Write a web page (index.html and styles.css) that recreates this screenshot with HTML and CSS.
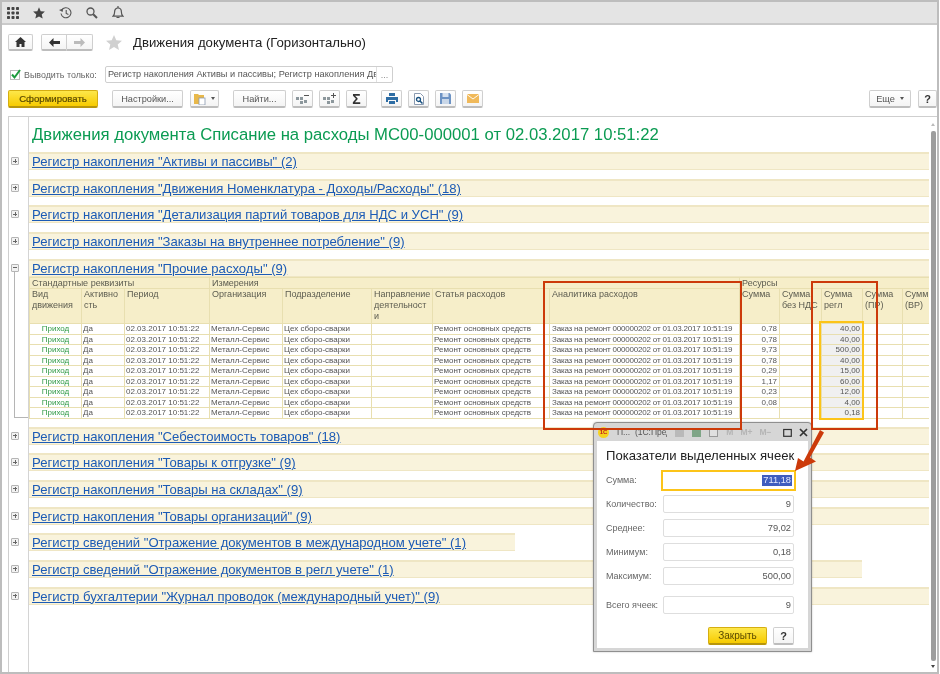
FILE: index.html
```html
<!DOCTYPE html>
<html lang="ru">
<head>
<meta charset="utf-8">
<title>Движения документа</title>
<link rel="stylesheet" href="styles.css">
</head>
<body>
<div class="window">
  <div class="topbar">
    <svg class="ti" width="12" height="12" viewBox="0 0 12 12"><g fill="#444"><rect x="0" y="0" width="3" height="3" rx=".7"/><rect x="4.5" y="0" width="3" height="3" rx=".7"/><rect x="9" y="0" width="3" height="3" rx=".7"/><rect x="0" y="4.5" width="3" height="3" rx=".7"/><rect x="4.5" y="4.5" width="3" height="3" rx=".7"/><rect x="9" y="4.5" width="3" height="3" rx=".7"/><rect x="0" y="9" width="3" height="3" rx=".7"/><rect x="4.5" y="9" width="3" height="3" rx=".7"/><rect x="9" y="9" width="3" height="3" rx=".7"/></g></svg>
    <svg class="ti" width="12" height="12" viewBox="0 0 12 12"><polygon fill="#444" points="6,0.3 7.7,4.2 11.9,4.6 8.7,7.4 9.7,11.6 6,9.4 2.3,11.6 3.3,7.4 0.1,4.6 4.3,4.2"/></svg>
    <svg class="ti" width="13" height="12" viewBox="0 0 13 12"><path fill="none" stroke="#555" stroke-width="1.1" d="M2.6 3.2A5 5 0 1 1 2 6.5M7.2 3v3.4l2.2 1.2"/><polygon fill="#555" points="0,3 4.2,1.5 3.6,5"/></svg>
    <svg class="ti" width="12" height="12" viewBox="0 0 12 12"><circle cx="4.5" cy="4.5" r="3.5" fill="none" stroke="#555" stroke-width="1.3"/><path d="M7.2 7.2L11 11" stroke="#555" stroke-width="2"/></svg>
    <svg class="ti" width="12" height="13" viewBox="0 0 12 13"><path fill="none" stroke="#555" stroke-width="1.2" d="M1 10.2c1.3-1 1.6-2 1.6-4.2S4 2 6 2s3.4 1.8 3.4 4 .3 3.2 1.6 4.2z"/><path d="M6 0v2M4.5 11.5h3" stroke="#555" stroke-width="1.2"/></svg>
  </div>

  <div class="navrow">
    <button class="btn home" type="button" aria-label="Начало"><svg width="11" height="10" viewBox="0 0 11 10"><path fill="#333" d="M5.5 0L11 5H9.500v5H6.500V7h-2v3h-3V5H0z"/></svg></button>
    <div class="navpair">
      <button class="btn" type="button" aria-label="Назад"><svg width="11" height="9" viewBox="0 0 11 9"><path fill="#333" d="M4.500 0v3H11v3H4.500v3L0 4.500z"/></svg></button>
      <button class="btn" type="button" aria-label="Вперёд"><svg width="11" height="9" viewBox="0 0 11 9"><path fill="#bbb" d="M6.500 0v3H0v3h6.500v3L11 4.500z"/></svg></button>
    </div>
    <svg class="bigstar" width="16" height="15" viewBox="0 0 16 15"><polygon fill="#d0d0d0" points="8,0 10.3,5.3 16,5.8 11.7,9.5 13,15 8,12.1 3,15 4.3,9.500 0,5.8 5.7,5.3"/></svg>
    <h1 class="doctitle">Движения документа (Горизонтально)</h1>
  </div>

  <div class="filterrow">
    <span class="check"><svg width="11" height="11" viewBox="0 0 11 11"><path d="M2 5.500l2.500 3L10 1" fill="none" stroke="#1a9a3c" stroke-width="2"/></svg></span>
    <label class="filterlabel">Выводить только:</label>
    <div class="filterinput"><span class="filtertext">Регистр накопления Активы и пассивы; Регистр накопления Дви</span><span class="dots">...</span></div>
  </div>

  <div class="toolbar">
    <button class="btn primary w-form" type="button">Сформировать</button>
    <button class="btn w-set sep" type="button">Настройки...</button>
    <button class="btn w-var" type="button"><svg width="12" height="12" viewBox="0 0 12 12"><path fill="#e8b84a" d="M0 1h4l1 1h5v3H5v6H0z"/><rect x="5" y="5" width="6" height="7" fill="#fff" stroke="#8a9ab0" stroke-width=".8"/></svg><i class="caret"></i></button>
    <button class="btn w-find sep" type="button">Найти...</button>
    <button class="btn w-icon" type="button" aria-label="Свернуть"><svg width="13" height="12" viewBox="0 0 13 12"><g fill="#8c979c"><rect x="0" y="4" width="3" height="3"/><rect x="4" y="4" width="3" height="3"/><rect x="4" y="8" width="3" height="3"/><rect x="8" y="7" width="3" height="3"/></g><path d="M8 2.500h5" stroke="#555"/></svg></button>
    <button class="btn w-icon" type="button" aria-label="Развернуть"><svg width="13" height="12" viewBox="0 0 13 12"><g fill="#8c979c"><rect x="0" y="4" width="3" height="3"/><rect x="4" y="4" width="3" height="3"/><rect x="4" y="8" width="3" height="3"/><rect x="8" y="7" width="3" height="3"/></g><path d="M8 2.500h5M10.500 0v5" stroke="#555"/></svg></button>
    <button class="btn w-icon sigma" type="button">Σ</button>
    <button class="btn w-icon sep" type="button" aria-label="Печать"><svg width="12" height="11" viewBox="0 0 12 11"><path fill="#2e6da4" d="M3 0h6v3H3zM0 4h12v5h-2V7H2v2H0z"/><rect x="3" y="8" width="6" height="3" fill="#2e6da4"/></svg></button>
    <button class="btn w-icon" type="button" aria-label="Просмотр"><svg width="10" height="12" viewBox="0 0 10 12"><path fill="#fff" stroke="#8a9ab0" d="M.5.500h6l3 3v8h-9z"/><circle cx="4.500" cy="6.500" r="2" fill="none" stroke="#17507f" stroke-width="1.300"/><path d="M6 8l2.500 2.500" stroke="#17507f" stroke-width="1.500"/></svg></button>
    <button class="btn w-icon" type="button" aria-label="Сохранить"><svg width="11" height="11" viewBox="0 0 11 11"><path fill="#6d93c4" d="M0 0h9.500L11 1.500V11H0z"/><rect x="2.500" y="0" width="6" height="4" fill="#d7e2f0"/><rect x="2" y="6" width="7" height="5" fill="#c9d7e8"/></svg></button>
    <button class="btn w-icon" type="button" aria-label="Почта"><svg width="12" height="9" viewBox="0 0 12 9"><rect width="12" height="9" fill="#f0b95a"/><path d="M0 .5l6 4.500 6-4.500" fill="none" stroke="#fff" stroke-width=".9"/></svg></button>
    <button class="btn w-more push" type="button">Еще<i class="caret"></i></button>
    <button class="btn w-help" type="button">?</button>
  </div>

  <div class="report">
    <div class="main">
      <div class="group titlegroup"><div class="gutter"></div><div class="cellbody"><div class="reporttitle">Движения документа Списание на расходы МС00-000001 от 02.03.2017 10:51:22</div></div></div>

      <div class="group"><div class="gutter"><span class="tog plus"></span></div><div class="cellbody"><div class="band"><a href="#">Регистр накопления "Активы и пассивы" (2)</a></div></div></div>
      <div class="group"><div class="gutter"><span class="tog plus"></span></div><div class="cellbody"><div class="band"><a href="#">Регистр накопления "Движения Номенклатура - Доходы/Расходы" (18)</a></div></div></div>
      <div class="group"><div class="gutter"><span class="tog plus"></span></div><div class="cellbody"><div class="band"><a href="#">Регистр накопления "Детализация партий товаров для НДС и УСН" (9)</a></div></div></div>
      <div class="group"><div class="gutter"><span class="tog plus"></span></div><div class="cellbody"><div class="band"><a href="#">Регистр накопления "Заказы на внутреннее потребление" (9)</a></div></div></div>

      <div class="group open">
        <div class="gutter"><span class="tog"></span><span class="bracket"></span></div>
        <div class="cellbody">
          <div class="band"><a href="#">Регистр накопления "Прочие расходы" (9)</a></div>
          <table class="grid">
            <colgroup><col class="c1"><col class="c2"><col class="c3"><col class="c4"><col class="c5"><col class="c6"><col class="c7"><col class="c8"><col class="c9"><col class="c10"><col class="c11"><col class="c12"><col class="c13"></colgroup>
            <thead>
              <tr class="h1"><th colspan="3">Стандартные реквизиты</th><th colspan="5">Измерения</th><th colspan="5">Ресурсы</th></tr>
              <tr class="h2"><th>Вид<br>движения</th><th>Активно<br>сть</th><th>Период</th><th>Организация</th><th>Подразделение</th><th>Направление<br>деятельност<br>и</th><th>Статья расходов</th><th class="anal">Аналитика расходов</th><th>Сумма</th><th>Сумма<br>без НДС</th><th>Сумма<br>регл</th><th>Сумма<br>(ПР)</th><th>Сумм<br>(ВР)</th></tr>
            </thead>
            <tbody>
              <tr><td class="kind">Приход</td><td>Да</td><td>02.03.2017 10:51:22</td><td>Металл-Сервис</td><td>Цех сборо-сварки</td><td></td><td>Ремонт основных средств</td><td class="anal">Заказ на ремонт 000000202 от 01.03.2017 10:51:19</td><td class="num">0,78</td><td></td><td class="num sel">40,00</td><td></td><td></td></tr>
              <tr><td class="kind">Приход</td><td>Да</td><td>02.03.2017 10:51:22</td><td>Металл-Сервис</td><td>Цех сборо-сварки</td><td></td><td>Ремонт основных средств</td><td class="anal">Заказ на ремонт 000000202 от 01.03.2017 10:51:19</td><td class="num">0,78</td><td></td><td class="num sel">40,00</td><td></td><td></td></tr>
              <tr><td class="kind">Приход</td><td>Да</td><td>02.03.2017 10:51:22</td><td>Металл-Сервис</td><td>Цех сборо-сварки</td><td></td><td>Ремонт основных средств</td><td class="anal">Заказ на ремонт 000000202 от 01.03.2017 10:51:19</td><td class="num">9,73</td><td></td><td class="num sel">500,00</td><td></td><td></td></tr>
              <tr><td class="kind">Приход</td><td>Да</td><td>02.03.2017 10:51:22</td><td>Металл-Сервис</td><td>Цех сборо-сварки</td><td></td><td>Ремонт основных средств</td><td class="anal">Заказ на ремонт 000000202 от 01.03.2017 10:51:19</td><td class="num">0,78</td><td></td><td class="num sel">40,00</td><td></td><td></td></tr>
              <tr><td class="kind">Приход</td><td>Да</td><td>02.03.2017 10:51:22</td><td>Металл-Сервис</td><td>Цех сборо-сварки</td><td></td><td>Ремонт основных средств</td><td class="anal">Заказ на ремонт 000000202 от 01.03.2017 10:51:19</td><td class="num">0,29</td><td></td><td class="num sel">15,00</td><td></td><td></td></tr>
              <tr><td class="kind">Приход</td><td>Да</td><td>02.03.2017 10:51:22</td><td>Металл-Сервис</td><td>Цех сборо-сварки</td><td></td><td>Ремонт основных средств</td><td class="anal">Заказ на ремонт 000000202 от 01.03.2017 10:51:19</td><td class="num">1,17</td><td></td><td class="num sel">60,00</td><td></td><td></td></tr>
              <tr><td class="kind">Приход</td><td>Да</td><td>02.03.2017 10:51:22</td><td>Металл-Сервис</td><td>Цех сборо-сварки</td><td></td><td>Ремонт основных средств</td><td class="anal">Заказ на ремонт 000000202 от 01.03.2017 10:51:19</td><td class="num">0,23</td><td></td><td class="num sel">12,00</td><td></td><td></td></tr>
              <tr><td class="kind">Приход</td><td>Да</td><td>02.03.2017 10:51:22</td><td>Металл-Сервис</td><td>Цех сборо-сварки</td><td></td><td>Ремонт основных средств</td><td class="anal">Заказ на ремонт 000000202 от 01.03.2017 10:51:19</td><td class="num">0,08</td><td></td><td class="num sel">4,00</td><td></td><td></td></tr>
              <tr><td class="kind">Приход</td><td>Да</td><td>02.03.2017 10:51:22</td><td>Металл-Сервис</td><td>Цех сборо-сварки</td><td></td><td>Ремонт основных средств</td><td class="anal">Заказ на ремонт 000000202 от 01.03.2017 10:51:19</td><td class="num"></td><td></td><td class="num sel">0,18</td><td></td><td></td></tr>
            </tbody>
          </table>
        </div>
      </div>

      <div class="group"><div class="gutter"><span class="tog plus"></span></div><div class="cellbody"><div class="band"><a href="#">Регистр накопления "Себестоимость товаров" (18)</a></div></div></div>
      <div class="group"><div class="gutter"><span class="tog plus"></span></div><div class="cellbody"><div class="band"><a href="#">Регистр накопления "Товары к отгрузке" (9)</a></div></div></div>
      <div class="group"><div class="gutter"><span class="tog plus"></span></div><div class="cellbody"><div class="band"><a href="#">Регистр накопления "Товары на складах" (9)</a></div></div></div>
      <div class="group"><div class="gutter"><span class="tog plus"></span></div><div class="cellbody"><div class="band"><a href="#">Регистр накопления "Товары организаций" (9)</a></div></div></div>
      <div class="group"><div class="gutter"><span class="tog plus"></span></div><div class="cellbody"><div class="band short"><a href="#">Регистр сведений "Отражение документов в международном учете" (1)</a></div></div></div>
      <div class="group"><div class="gutter"><span class="tog plus"></span></div><div class="cellbody"><div class="band mid"><a href="#">Регистр сведений "Отражение документов в регл учете" (1)</a></div></div></div>
      <div class="group"><div class="gutter"><span class="tog plus"></span></div><div class="cellbody"><div class="band"><a href="#">Регистр бухгалтерии "Журнал проводок (международный учет)" (9)</a></div></div></div>
      <div class="group filler"><div class="gutter"></div><div class="cellbody"></div></div>
    </div>
    <div class="scroll"><i class="arr up"></i><span class="thumb"></span><i class="arr down"></i></div>
  </div>

  <div class="modal">
    <div class="mtitle">
      <span class="logo">1С</span>
      <span class="mname">П...&nbsp; (1С:Предп...</span>
      <span class="mtools">
        <i class="mbk"></i><i class="mbk green"></i><i class="mbk cal"></i>
        <b>M</b><b>M+</b><b>M−</b>
      </span>
      <svg class="mwin" width="9" height="9" viewBox="0 0 9 9"><rect x=".7" y="1.500" width="7.600" height="6.800" fill="none" stroke="#333" stroke-width="1.200"/></svg>
      <svg class="mwin" width="9" height="9" viewBox="0 0 9 9"><path d="M1 1l7 7M8 1L1 8" stroke="#333" stroke-width="1.700"/></svg>
    </div>
    <div class="mbody">
      <h2 class="mhead">Показатели выделенных ячеек</h2>
      <div class="mform">
        <span class="mlabel">Сумма:</span><div class="field focus"><span class="selected">711,18</span></div>
        <span class="mlabel">Количество:</span><div class="field">9</div>
        <span class="mlabel">Среднее:</span><div class="field">79,02</div>
        <span class="mlabel">Минимум:</span><div class="field">0,18</div>
        <span class="mlabel">Максимум:</span><div class="field">500,00</div>
        <span class="mlabel gapped">Всего ячеек:</span><div class="field gapped">9</div>
      </div>
      <div class="mbuttons">
        <button class="btn primary w-close" type="button">Закрыть</button>
        <button class="btn w-mhelp" type="button">?</button>
      </div>
    </div>
  </div>

  <div class="mark m1"></div>
  <div class="mark m2"></div>
  <div class="mark-y"></div>
  <svg class="arrow" width="30" height="42" viewBox="0 0 30 42"><path fill="#cc3a0a" d="M25 0l4 2.500-14 25 6 4L0 41l3-13 5.500 3.500z"/></svg>
</div>
</body>
</html>
```
FILE: styles.css
```css
* { box-sizing: border-box; }
html, body { margin: 0; padding: 0; background: #fff; }
body { font-family: "Liberation Sans", Arial, sans-serif; color: #444; }

.window {
  position: relative;
  width: 939px;
  height: 674px;
  border: 2px solid #bdbdbd;
  display: flex;
  flex-direction: column;
  overflow: hidden;
  background: #fff;
  filter: blur(0.45px);
}

/* top system bar */
.topbar {
  height: 23px;
  flex: none;
  background: #e4e4e4;
  border-bottom: 2px solid #cacaca;
  display: flex;
  align-items: center;
  padding: 0 0 0 5px;
  gap: 14px;
}

/* buttons */
.btn {
  display: inline-flex;
  align-items: center;
  justify-content: center;
  height: 18px;
  padding: 0;
  border: 1px solid #cfcfcf;
  border-bottom: 2px solid #bdbdbd;
  border-radius: 2px;
  background: linear-gradient(#fff, #f4f4f4);
  font: 9.2px "Liberation Sans", Arial, sans-serif;
  color: #555;
  flex: none;
}
.primary {
  background: linear-gradient(#fde74a, #f7cb00);
  border-color: #d5ae10;
  border-bottom-color: #b8960c;
  color: #5a4a00;
}
.caret {
  display: inline-block;
  width: 0;
  height: 0;
  margin-left: 5px;
  border: 2px solid transparent;
  border-top: 3px solid #555;
  border-bottom: 0;
}

/* nav row */
.navrow {
  height: 17px;
  margin: 9px 0 0 6px;
  display: flex;
  align-items: center;
  flex: none;
}
.home { width: 25px; height: 17px; }
.navpair { display: flex; margin-left: 8px; }
.navpair .btn { width: 26px; height: 17px; }
.navpair .btn:first-child { border-radius: 2px 0 0 2px; }
.navpair .btn:last-child { border-left: 0; border-radius: 0 2px 2px 0; }
.bigstar { margin-left: 13px; flex: none; }
.doctitle {
  margin: 0 0 0 11px;
  font-size: 13.2px;
  font-weight: 400;
  color: #222;
  white-space: nowrap;
}

/* filter row */
.filterrow {
  height: 17px;
  margin: 15px 0 0 8px;
  display: flex;
  align-items: center;
  flex: none;
}
.check {
  width: 10px;
  height: 10px;
  border: 1px solid #bbb;
  display: flex;
  background: #fff;
}
.check svg { flex: none; margin: -2px 0 0 -1px; }
.filterlabel { margin-left: 4px; width: 81px; font-size: 8.9px; color: #666; white-space: nowrap; }
.filterinput {
  display: flex;
  width: 288px;
  height: 17px;
  border: 1px solid #cfcfcf;
  border-radius: 2px;
  background: #fff;
}
.filtertext {
  width: 271px;
  padding: 0 0 0 2px;
  font-size: 9.2px;
  line-height: 15px;
  color: #555;
  white-space: nowrap;
  overflow: hidden;
  border-right: 1px solid #e0e0e0;
}
.dots { flex: 1; text-align: center; font-size: 9px; line-height: 16px; color: #888; }

/* toolbar */
.toolbar {
  height: 18px;
  margin: 7px 0 0 6px;
  display: flex;
  gap: 7px;
  flex: none;
}
.sep { margin-left: 7px; }
.push { margin-left: auto; }
.w-form { width: 90px; font-size: 9.6px; -webkit-text-stroke: .2px #5a4a00; }
.w-set { width: 71px; }
.w-var { width: 29px; }
.w-find { width: 53px; }
.w-icon { width: 21px; }
.w-more { width: 42px; }
.w-help { width: 19px; font-weight: 700; font-size: 11px; color: #333; }
.sigma { font-size: 14px; font-weight: 700; color: #333; }
.toolbar .btn + .w-icon { margin-left: -1px; }
.toolbar .sep.w-icon { margin-left: 7px; }

/* report */
.report {
  flex: 1;
  min-height: 0;
  margin: 8px 0 0 6px;
  border-top: 1px solid #cfcfcf;
  border-left: 1px solid #cfcfcf;
  display: flex;
}
.main { width: 920px; display: flex; flex-direction: column; overflow: hidden; }
.group { display: flex; flex: none; }
.gutter {
  width: 20px;
  flex: none;
  border-right: 1px solid #d4d4d4;
  display: flex;
  flex-direction: column;
  padding-top: 5px;
}
.cellbody { width: 900px; padding-bottom: 8.7px; }
.titlegroup .cellbody { height: 35px; padding: 0; }
.filler { flex: 1; }
.filler .cellbody { padding: 0; }
.reporttitle {
  padding: 8px 0 0 3px;
  font-size: 16.7px;
  line-height: 19px;
  color: #0b9b52;
  white-space: nowrap;
}

.tog {
  position: relative;
  display: block;
  flex: none;
  width: 8px;
  height: 8px;
  margin-left: 2px;
  border: 1px solid #b5b5b5;
  border-radius: 1px;
  background: linear-gradient(90deg, transparent 1px, #666 1px, #666 5px, transparent 5px) center / 100% 1px no-repeat, #f2f2f2;
}
.plus::after {
  content: "";
  position: absolute;
  left: 2.5px;
  top: 1px;
  width: 1px;
  height: 4px;
  background: #666;
}
.bracket {
  flex: 1;
  margin: 0 0 9px 5px;
  border-left: 1px solid #b5b5b5;
  border-bottom: 1px solid #b5b5b5;
}

.band {
  height: 18px;
  padding-left: 3px;
  background: #f9f3dc;
  border-top: 2px solid #efe6c4;
  border-bottom: 1px solid #efe6c4;
  white-space: nowrap;
  overflow: hidden;
}
.band a { font-size: 13.1px; line-height: 15px; color: #1c5bb5; display: block; }
.short { width: 486px; }
.mid { width: 833px; }

/* table */
.open .cellbody { padding-bottom: 7.8px; }
.grid {
  table-layout: fixed;
  width: 900px;
  border-collapse: collapse;
  font-size: 8px;
  line-height: 9px;
  color: #555;
}
.c1 { width: 52px; } .c2 { width: 43px; } .c3 { width: 85px; } .c4 { width: 73px; }
.c5 { width: 89px; } .c6 { width: 61px; } .c7 { width: 117px; } .c8 { width: 190px; }
.c9 { width: 40px; } .c10 { width: 42px; } .c11 { width: 41px; } .c12 { width: 40px; } .c13 { width: 27px; }
.grid th {
  background: #f6eec9;
  border: 1px solid #e8dfb0;
  padding: 0 2px;
  text-align: left;
  vertical-align: top;
  font-weight: 400;
  font-size: 9px;
  line-height: 11.3px;
  color: #5c5c50;
  white-space: nowrap;
  overflow: hidden;
}
.h1 { height: 11px; }
.h1 th { line-height: 10px; }
.h2 { height: 35px; }
.grid td {
  border: 1px solid #e8dfb0;
  padding: 0 1px;
  height: 10px;
  white-space: nowrap;
  overflow: hidden;
  background: #fff;
}
.grid tbody tr:nth-child(odd) td { height: 11px; }
.grid .kind { color: #2f9a46; text-align: center; }
.grid .num { text-align: right; padding-right: 2px; }
.grid .sel { background: #f0f0f0; }
.grid .anal { padding-left: 2px; }
.grid td.anal { letter-spacing: -0.19px; }

/* scrollbar */
.scroll {
  width: 8px;
  flex: none;
  display: flex;
  flex-direction: column;
  align-items: center;
  padding: 6px 0 4px;
}
.thumb { flex: 1; width: 5px; margin: 5px 0 4px; border-radius: 2px; background: #9d9d9d; }
.arr { width: 0; height: 0; border: 2px solid transparent; }
.arr.up { border-bottom: 3px solid #bbb; border-top: 0; }
.arr.down { border-top: 3px solid #444; border-bottom: 0; }

/* modal */
.modal {
  position: absolute;
  left: 591px;
  top: 420px;
  width: 219px;
  height: 230px;
  border: 1px solid #8f8f8f;
  border-radius: 4px 4px 0 0;
  background: #d6d6d6;
  padding: 0 3px 3px;
  display: flex;
  flex-direction: column;
  box-shadow: 0 0 2px rgba(0,0,0,.25);
}
.mtitle { height: 18px; display: flex; align-items: center; gap: 8px; font-size: 8.5px; color: #555; flex: none; white-space: nowrap; }
.logo {
  width: 11px;
  height: 11px;
  margin-left: 1px;
  border-radius: 50%;
  background: #f6d21f;
  color: #c3201a;
  font-size: 6px;
  font-weight: 700;
  line-height: 11px;
  text-align: center;
  flex: none;
}
.mname { width: 52px; overflow: hidden; }
.mtools { display: flex; align-items: center; gap: 8px; width: 104px; font-size: 8.5px; }
.mtools b { color: #b5b5b5; margin-right: -1px; }
.mbk { width: 9px; height: 9px; background: #b9b9b9; flex: none; }
.green { background: #7fa587; }
.cal { background: #e0e0e0; border: 1px solid #999; }
.mwin { flex: none; margin-left: -1px; }
.mbody {
  flex: 1;
  background: #fff;
  padding: 6px 14px 0 9px;
  display: flex;
  flex-direction: column;
}
.mhead { margin: 0; font-size: 13.1px; line-height: 17px; font-weight: 400; color: #222; white-space: nowrap; }
.mform {
  display: grid;
  grid-template-columns: 57px 131px;
  grid-auto-rows: 18px;
  row-gap: 6px;
  align-items: center;
  margin-top: 7px;
}
.mlabel { font-size: 9px; color: #666; white-space: nowrap; }
.field {
  height: 18px;
  border: 1px solid #dedede;
  border-radius: 2px;
  background: #fff;
  text-align: right;
  padding-right: 2px;
  font-size: 9.3px;
  line-height: 16px;
  color: #555;
}
.focus {
  position: relative;
  height: 21px;
  margin: 0 -2px;
  border: 2px solid #fcc419;
  border-radius: 0;
}
.selected { display: inline-block; background: #3f5dbe; color: #e6ebff; line-height: 11px; padding: 0 1px; }
.gapped { transform: translateY(5px); }
.mbuttons { display: flex; justify-content: flex-end; gap: 6px; margin-top: 18px; }
.w-close { width: 59px; font-size: 10px; }
.w-mhelp { width: 21px; font-weight: 700; font-size: 11px; color: #333; }

/* annotations */
.mark { position: absolute; top: 279px; height: 149px; border: 2px solid #cc3a0a; }
.m1 { left: 541px; width: 199px; }
.m2 { left: 809px; width: 67px; }
.mark-y { position: absolute; left: 817px; top: 319px; width: 45px; height: 99px; border: 2px solid #fcc419; }
.arrow { position: absolute; left: 793px; top: 428px; }
```
